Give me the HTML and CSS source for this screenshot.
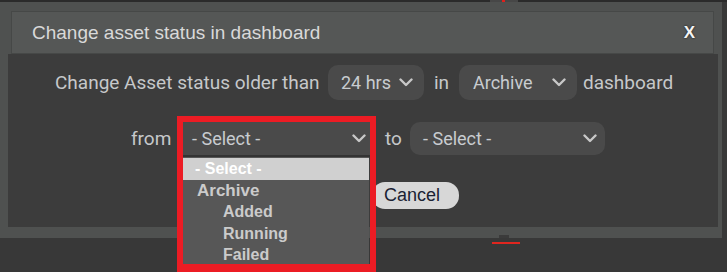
FILE: index.html
```html
<!DOCTYPE html>
<html>
<head>
<meta charset="utf-8">
<link rel="stylesheet" href="styles.css">
</head>
<body>
<div class="topbar"><span class="topgap"><span class="topmark"></span></span></div>
<div class="dialog">
  <div class="titlebar">
    <span class="title">Change asset status in dashboard</span>
    <span class="close">X</span>
  </div>
  <div class="content">
    <div class="row row1">
      <span class="label l-change">Change Asset status older than</span>
      <div class="select s-hrs"><span>24 hrs</span><svg class="chev" width="14" height="9" viewBox="0 0 14 9"><polyline points="1.5,1.5 7,7 12.5,1.5" fill="none" stroke="currentColor" stroke-width="2.4" stroke-linecap="round" stroke-linejoin="round"/></svg></div>
      <span class="label l-in">in</span>
      <div class="select s-dash"><span>Archive</span><svg class="chev" width="14" height="9" viewBox="0 0 14 9"><polyline points="1.5,1.5 7,7 12.5,1.5" fill="none" stroke="currentColor" stroke-width="2.4" stroke-linecap="round" stroke-linejoin="round"/></svg></div>
      <span class="label l-dash">dashboard</span>
    </div>
    <div class="row row2">
      <span class="label l-from">from</span>
      <div class="from-wrap">
        <div class="select s-from"><span>- Select -</span><svg class="chev" width="14" height="9" viewBox="0 0 14 9"><polyline points="1.5,1.5 7,7 12.5,1.5" fill="none" stroke="currentColor" stroke-width="2.4" stroke-linecap="round" stroke-linejoin="round"/></svg></div>
        <ul class="list">
          <li class="item hl">- Select -</li>
          <li class="item group">Archive</li>
          <li class="item opt">Added</li>
          <li class="item opt">Running</li>
          <li class="item opt">Failed</li>
        </ul>
        <div class="mark"></div>
      </div>
      <span class="label l-to">to</span>
      <div class="select s-to"><span>- Select -</span><svg class="chev" width="14" height="9" viewBox="0 0 14 9"><polyline points="1.5,1.5 7,7 12.5,1.5" fill="none" stroke="currentColor" stroke-width="2.4" stroke-linecap="round" stroke-linejoin="round"/></svg></div>
    </div>
    <div class="row row3">
      <button class="btn">Cancel</button>
    </div>
  </div>
</div>
<div class="tab"></div>
<div class="redline"></div>
</body>
</html>
```
FILE: styles.css
```css
html, body {
  margin: 0;
  padding: 0;
}
body {
  background: #383838;
  width: 727px;
  height: 272px;
  overflow: hidden;
  font-family: Roboto, "Liberation Sans", sans-serif;
}
.topbar {
  height: 2px;
  background: #2b2b2b;
  display: flex;
}
.topgap {
  margin-left: 490px;
  width: 28px;
  height: 2px;
  background: #474747;
  display: flex;
}
.topmark {
  margin-left: 12px;
  width: 3px;
  height: 2px;
  background: #e0201c;
}
.dialog {
  width: 722px;
  height: 236px;
  box-sizing: border-box;
  background: #4f5150;
  padding: 9px 4px 11px 8px;
}
.titlebar {
  height: 43px;
  box-sizing: border-box;
  margin: 0 4px 0 3px;
  background: #555756;
  border: 1px solid #464847;
  display: flex;
  align-items: center;
  padding-left: 20px;
}
.title {
  font-family: "Liberation Sans", Arial, sans-serif;
  font-size: 19px;
  color: #d9d9d9;
}
.close {
  margin-left: auto;
  margin-right: 18px;
  font-family: "Liberation Sans", Arial, sans-serif;
  font-weight: bold;
  font-size: 17px;
  color: #f4f4f4;
  text-shadow: 0 0 2px #111;
}
.content {
  height: 173px;
  background: #3c3c3c;
  padding-top: 11px;
  box-sizing: border-box;
}
.row {
  display: flex;
  align-items: center;
}
.label {
  font-size: 19px;
  color: #c6c8ca;
  white-space: nowrap;
}
.select {
  display: flex;
  align-items: center;
  justify-content: space-between;
  box-sizing: border-box;
  background: #4a4a4a;
  border-radius: 10px;
  color: #c8ccd0;
  font-size: 18px;
  padding: 0 11px 0 13px;
}
.chev {
  color: #c8c8c8;
  display: block;
}
.row1 {
  height: 35px;
  padding-left: 47px;
}
.l-change {
  width: 273px;
}
.s-hrs {
  width: 96px;
  height: 35px;
}
.l-in {
  margin-left: 10px;
  width: 25px;
}
.s-dash {
  width: 118px;
  height: 35px;
  padding-left: 14px;
}
.l-dash {
  margin-left: 6px;
}
.row2 {
  margin-top: 22px;
  height: 33px;
  padding-left: 123px;
}
.l-from {
  width: 52px;
}
.from-wrap {
  position: relative;
  width: 187px;
  height: 33px;
}
.s-from {
  width: 187px;
  height: 35px;
  border-radius: 0;
  border-bottom: 2px solid #333333;
  padding: 0 4px 0 9px;
}
.list {
  position: absolute;
  top: 35px;
  left: 0;
  width: 186px;
  margin: 0;
  padding: 1px 0 2px;
  list-style: none;
  background: #575757;
  box-sizing: border-box;
  z-index: 1;
  font-family: "Liberation Sans", Arial, sans-serif;
  font-weight: bold;
  font-size: 16px;
  color: #cbcbcb;
}
.item {
  height: 21.6px;
  line-height: 21.6px;
  padding-left: 12px;
  white-space: nowrap;
}
.hl {
  background: #d0d0d0;
  color: #ffffff;
}
.group {
  font-size: 17px;
  padding-left: 14px;
}
.opt {
  padding-left: 40px;
}
.mark {
  position: absolute;
  top: -6px;
  left: -6px;
  width: 199px;
  height: 156px;
  box-sizing: border-box;
  border: 6px solid #ec1c24;
  border-bottom-width: 8px;
  z-index: 2;
}
.l-to {
  margin-left: 15px;
  width: 25px;
}
.s-to {
  width: 195px;
  height: 33px;
  padding-right: 8px;
}
.row3 {
  margin-top: 27px;
  padding-left: 364px;
}
.btn {
  width: 87px;
  height: 27px;
  border: none;
  border-radius: 13px;
  background: #d7d7d7;
  color: #1a2233;
  font-family: "Liberation Sans", Arial, sans-serif;
  font-size: 18px;
  text-align: left;
  padding: 0 0 0 12px;
}
.tab {
  margin: -3px 0 0 499px;
  width: 10px;
  height: 3px;
  background: #3b3b3b;
}
.redline {
  margin: 4px 0 0 492px;
  width: 28px;
  height: 2px;
  background: #e0261f;
}
```
